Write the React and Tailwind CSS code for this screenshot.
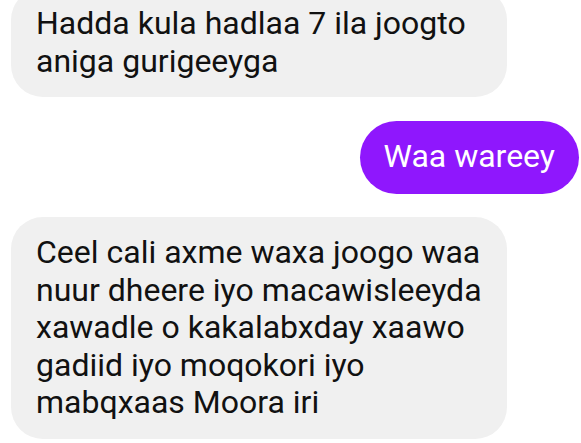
import React from 'react';

const messages = [
  { id: 1, mine: false, text: 'Hadda kula hadlaa 7 ila joogto aniga gurigeeyga' },
  { id: 2, mine: true, text: 'Waa wareey' },
  {
    id: 3,
    mine: false,
    text: 'Ceel cali axme waxa joogo waa nuur dheere iyo macawisleeyda xawadle o kakalabxday xaawo gadiid iyo moqokori iyo mabqxaas Moora iri',
  },
];

const Bubble = ({ mine, text }) => {
  if (mine) {
    return (
      <div className="flex justify-end pr-[2px]">
        <div className="h-[73px] flex items-center px-[24px] rounded-full bg-[#8f17fd] text-white">
          {text}
        </div>
      </div>
    );
  }
  return (
    <div className="flex justify-start pl-[11px]">
      <div className="w-[496px] px-[25px] py-[17px] rounded-[32px] bg-[#f0f0f0] text-[#111]">
        {text}
      </div>
    </div>
  );
};

const App = () => {
  return (
    <div
      className="w-[581px] h-[443px] overflow-hidden bg-white text-[32px] leading-[37.5px]"
      style={{ fontFamily: 'Roboto, "Noto Sans", sans-serif' }}
    >
      <div className="flex flex-col gap-[23.5px] -mt-[12px]">
        {messages.map((m) => (
          <Bubble key={m.id} mine={m.mine} text={m.text} />
        ))}
      </div>
    </div>
  );
};

export default App;
